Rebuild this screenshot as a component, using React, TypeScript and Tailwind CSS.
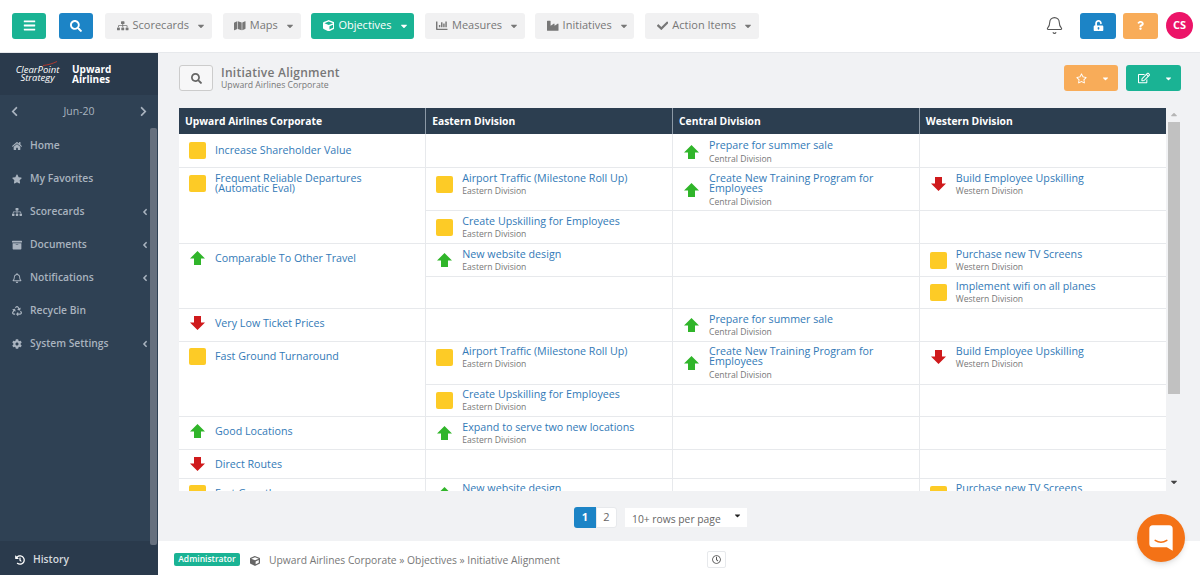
import type { ReactNode } from "react"
import {
  FaAngleLeft,
  FaArchive,
  FaBars,
  FaCaretDown,
  FaChartBar,
  FaCheck,
  FaChevronLeft,
  FaChevronRight,
  FaCog,
  FaCube,
  FaHistory,
  FaHome,
  FaIndustry,
  FaMap,
  FaQuestion,
  FaRecycle,
  FaRegBell,
  FaRegClock,
  FaRegEdit,
  FaRegStar,
  FaSearch,
  FaSitemap,
  FaStar,
  FaUnlockAlt,
} from "react-icons/fa"
import { Bell } from "lucide-react"

type Status = "yellow" | "up" | "down"
type Item = { status: Status; title: string; sub?: string }
type Cell = { item?: Item; rowSpan?: number }

const E = "Eastern Division"
const C = "Central Division"
const W = "Western Division"

const airport: Item = { status: "yellow", title: "Airport Traffic (Milestone Roll Up)", sub: E }
const upskill: Item = { status: "yellow", title: "Create Upskilling for Employees", sub: E }
const training: Item = { status: "up", title: "Create New Training Program for Employees", sub: C }
const build: Item = { status: "down", title: "Build Employee Upskilling", sub: W }
const prepare: Item = { status: "up", title: "Prepare for summer sale", sub: C }
const website: Item = { status: "up", title: "New website design", sub: E }
const screens: Item = { status: "yellow", title: "Purchase new TV Screens", sub: W }

// pad: top padding of items with a sub line, top: top margin of items without one
const rows: { h: number; pad: number; top: number; cells: Cell[] }[] = [
  { h: 33, pad: 6, top: 8, cells: [{ item: { status: "yellow", title: "Increase Shareholder Value" } }, {}, { item: prepare }, {}] },
  {
    h: 43,
    pad: 5,
    top: 7,
    cells: [
      { item: { status: "yellow", title: "Frequent Reliable Departures (Automatic Eval)" }, rowSpan: 2 },
      { item: airport },
      { item: training },
      { item: build },
    ],
  },
  { h: 33, pad: 5, top: 6, cells: [{ item: upskill }, {}, {}] },
  {
    h: 33,
    pad: 5,
    top: 6,
    cells: [
      { item: { status: "up", title: "Comparable To Other Travel" }, rowSpan: 2 },
      { item: website },
      {},
      { item: screens },
    ],
  },
  { h: 32, pad: 4, top: 6, cells: [{}, {}, { item: { status: "yellow", title: "Implement wifi on all planes", sub: W } }] },
  { h: 33, pad: 5, top: 6, cells: [{ item: { status: "down", title: "Very Low Ticket Prices" } }, {}, { item: prepare }, {}] },
  {
    h: 43,
    pad: 4,
    top: 6,
    cells: [
      { item: { status: "yellow", title: "Fast Ground Turnaround" }, rowSpan: 2 },
      { item: airport },
      { item: training },
      { item: build },
    ],
  },
  { h: 32, pad: 4, top: 6, cells: [{ item: upskill }, {}, {}] },
  {
    h: 33,
    pad: 5,
    top: 6,
    cells: [
      { item: { status: "up", title: "Good Locations" } },
      { item: { status: "up", title: "Expand to serve two new locations", sub: E } },
      {},
      {},
    ],
  },
  { h: 29, pad: 5, top: 6, cells: [{ item: { status: "down", title: "Direct Routes" } }, {}, {}, {}] },
  {
    h: 33,
    pad: 4,
    top: 6,
    cells: [{ item: { status: "yellow", title: "Fast Growth" } }, { item: website }, {}, { item: screens }],
  },
]

const navItems: { label: string; icon: ReactNode; w: string; active?: boolean }[] = [
  { label: "Scorecards", icon: <FaSitemap />, w: "w-[107px]" },
  { label: "Maps", icon: <FaMap />, w: "w-[78px]" },
  { label: "Objectives", icon: <FaCube />, w: "w-[103px]", active: true },
  { label: "Measures", icon: <FaChartBar />, w: "w-[100px]" },
  { label: "Initiatives", icon: <FaIndustry />, w: "w-[99px]" },
  { label: "Action Items", icon: <FaCheck />, w: "w-[114px]" },
]

const sideItems: { label: string; icon: ReactNode; more?: boolean }[] = [
  { label: "Home", icon: <FaHome /> },
  { label: "My Favorites", icon: <FaStar /> },
  { label: "Scorecards", icon: <FaSitemap />, more: true },
  { label: "Documents", icon: <FaArchive />, more: true },
  { label: "Notifications", icon: <FaRegBell />, more: true },
  { label: "Recycle Bin", icon: <FaRecycle /> },
  { label: "System Settings", icon: <FaCog />, more: true },
]

function StatusIcon({ status }: { status: Status }) {
  if (status === "yellow") return <div className="h-[17px] w-[17px] rounded-[2px] bg-[#fdcb26]" />
  return (
    <svg viewBox="0 0 15 14" className={`mx-auto h-[14px] w-[15px] ${status === "down" ? "rotate-180 text-[#cf1a1c]" : "text-[#30b52a]"}`}>
      <polygon points="7.5,0 15,7.5 11,7.5 11,14 4,14 4,7.5 0,7.5" fill="currentColor" />
    </svg>
  )
}

function ItemCell({ cell, pad, top }: { cell: Cell; pad: number; top: number }) {
  const { item } = cell
  return (
    <td rowSpan={cell.rowSpan} className="border-r border-b border-[#e7e9ec] p-0 align-top last:border-r-0">
      {item?.sub && (
        <div className="flex items-center gap-[9px] pl-[10px] pr-6" style={{ paddingTop: pad }}>
          <div className="w-[17px] shrink-0">
            <StatusIcon status={item.status} />
          </div>
          <div>
            <div className="text-[10.7px] leading-[10.5px] text-[#337ab7]">{item.title}</div>
            <div className="mt-[3px] text-[8.6px] leading-[10px] text-[#777]">{item.sub}</div>
          </div>
        </div>
      )}
      {item && !item.sub && (
        <div className="flex h-[17px] items-center gap-[9px] pl-[10px] pr-6" style={{ marginTop: top }}>
          <div className="w-[17px] shrink-0">
            <StatusIcon status={item.status} />
          </div>
          <div className="text-[10.7px] leading-[10.5px] text-[#337ab7]">{item.title}</div>
        </div>
      )}
    </td>
  )
}

export default function App() {
  return (
    <div className="flex h-[575px] w-[1200px] flex-col overflow-hidden bg-[#f1f2f4] font-['Open_Sans',sans-serif] text-[#666]">
      <header className="flex h-[53px] shrink-0 items-center border-b border-[#e7e9ec] bg-white pb-[1px] pl-3 pr-[7px]">
        <button className="flex h-[26px] w-[34px] items-center justify-center rounded-[3px] bg-[#1ab394] text-[13px] text-white">
          <FaBars />
        </button>
        <button className="ml-[13px] flex h-[26px] w-[34px] items-center justify-center rounded-[3px] bg-[#1c84c6] text-[12px] text-white">
          <FaSearch />
        </button>
        <div className="ml-[12px] flex w-[654px] justify-between">
          {navItems.map((n) => (
            <div
              key={n.label}
              className={`flex h-[26px] items-center justify-center gap-[4px] rounded-[3px] pl-[6px] text-[11px] ${n.w} ${
                n.active ? "bg-[#1ab394] text-white" : "bg-[#f1f1f2] text-[#777]"
              }`}
            >
              <span className="text-[11.5px]">{n.icon}</span>
              {n.label}
              <FaCaretDown className="ml-[3px] text-[10px]" />
            </div>
          ))}
        </div>
        <Bell className="ml-auto mr-[16px] h-[19px] w-[19px] text-[#555]" strokeWidth={1.4} />
        <button className="flex h-[26px] w-[36px] items-center justify-center rounded-[3px] bg-[#1c84c6] text-[11px] text-white">
          <FaUnlockAlt />
        </button>
        <button className="ml-[7px] flex h-[26px] w-[35px] items-center justify-center rounded-[3px] bg-[#f8ac59] text-[9px] text-white">
          <FaQuestion />
        </button>
        <div className="ml-[8px] flex h-[27px] w-[27px] items-center justify-center rounded-full bg-[#ec1468] text-[11px] font-bold text-white">
          CS
        </div>
      </header>

      <div className="flex min-h-0 flex-1">
        <aside className="flex w-[158px] shrink-0 flex-col bg-[#2f4154] text-[#a9b3bf]">
          <div className="flex h-[42px] shrink-0 items-center bg-[#2a3a4c] pl-[9px]">
            <div className="relative w-[63px] pr-[6px] text-center text-[9.5px] italic leading-[8.5px] text-white">
              <svg viewBox="0 0 14 5" className="absolute left-[34px] top-[-5px] h-[5px] w-[14px]">
                <path d="M0 4.5C5 4 10 2.5 14 0.5" fill="none" stroke="#c0392b" strokeWidth="0.9" />
              </svg>
              ClearPoint
              <br />
              Strategy
            </div>
            <div className="text-[10px] font-bold leading-[10.5px] text-white">
              Upward
              <br />
              Airlines
            </div>
          </div>
          <div className="flex h-[33px] shrink-0 items-center justify-between pl-[9px] pr-[9px] text-[10.5px]">
            <FaChevronLeft className="text-[11px]" />
            <span>Jun-20</span>
            <FaChevronRight className="text-[11px]" />
          </div>
          <div className="flex min-h-0 flex-1">
            <nav className="flex-1 pt-[1px]">
              {sideItems.map((s) => (
                <div key={s.label} className="flex h-[33px] items-center pl-[12px] text-[10.3px] font-semibold">
                  <span className="w-[17px] text-[10px]">{s.icon}</span>
                  <span className="ml-[1px]">{s.label}</span>
                  {s.more && <FaAngleLeft className="ml-auto text-[10px]" />}
                </div>
              ))}
            </nav>
            <div className="relative z-10 -mb-[4px] mr-[1px] w-[7px] rounded-[2px] bg-[#66707e]" />
          </div>
          <div className="flex h-[34px] shrink-0 items-center bg-[#2a3a4c] pl-[15px] pt-[4px] text-[10.3px] font-semibold text-[#d5d9de]">
            <FaHistory className="mr-[8px] text-[10px] text-white" />
            History
          </div>
        </aside>

        <main className="flex min-w-0 flex-1 flex-col">
          <div className="flex h-[55px] shrink-0 items-start pl-[21px] pr-[19px] pt-[12px]">
            <button className="flex h-[26px] w-[34px] items-center justify-center rounded-[3px] border border-[#ccc] bg-[#f7f7f8] text-[11px] text-[#666]">
              <FaSearch />
            </button>
            <div className="ml-[8px] pt-[1px]">
              <div className="text-[12px] font-semibold leading-[14px] tracking-[0.25px] text-[#777]">
                Initiative Alignment
              </div>
              <div className="text-[8.7px] leading-[10px] text-[#777]">Upward Airlines Corporate</div>
            </div>
            <div className="ml-auto flex gap-[8px]">
              <div className="flex h-[26px] w-[54px] items-center justify-between rounded-[3px] bg-[#f8ac59] pl-[12px] pr-[8px] text-white">
                <FaRegStar className="text-[11px]" />
                <FaCaretDown className="text-[9px]" />
              </div>
              <div className="flex h-[26px] w-[55px] items-center justify-between rounded-[3px] bg-[#1ab394] pl-[12px] pr-[8px] text-white">
                <FaRegEdit className="text-[12px]" />
                <FaCaretDown className="text-[9px]" />
              </div>
            </div>
          </div>

          <div className="flex h-[383px] shrink-0 pl-[21px] pr-[20px]">
            <div className="w-[988px] overflow-hidden">
              <table className="w-[987px] table-fixed border-collapse bg-white">
                <thead>
                  <tr className="h-[26px] bg-[#2c3e50] text-left text-[10.3px] font-bold text-white">
                    {["Upward Airlines Corporate", E, C, W].map((h) => (
                      <th key={h} className="border-r border-[#8c99a6] pl-[6px] pt-[2px] font-bold last:border-r-0">
                        {h}
                      </th>
                    ))}
                  </tr>
                </thead>
                <tbody>
                  {rows.map((r, i) => (
                    <tr key={i} style={{ height: r.h }}>
                      {r.cells.map((c, j) => (
                        <ItemCell key={j} cell={c} pad={r.pad} top={r.top} />
                      ))}
                    </tr>
                  ))}
                </tbody>
              </table>
            </div>
            <div className="flex w-[13px] flex-col items-center">
              <FaCaretDown className="mt-[2px] h-[10px] w-[10px] rotate-180 text-[#b5b5b5]" />
              <div className="mt-[2px] h-[272px] w-[12px] bg-[#c1c1c1]" />
              <FaCaretDown className="mb-[4px] mt-auto h-[10px] w-[10px] text-[#444]" />
            </div>
          </div>

          <div className="flex min-h-0 flex-1 items-start pl-[416px] pt-[16px]">
            <div className="flex h-[21px] w-[22px] items-center justify-center rounded-l-[3px] bg-[#1c84c6] text-[11px] font-bold text-white">
              1
            </div>
            <div className="flex h-[21px] w-[21px] items-center justify-center rounded-r-[3px] border border-[#e7e9ec] bg-white text-[11px] text-[#666]">
              2
            </div>
            <div className="ml-[8px] mt-[1px] flex h-[19px] w-[122px] items-start justify-between bg-white pl-[7px] pr-[5px] pt-[5px] text-[10.3px] leading-[13px] text-[#666]">
              10+ rows per page
              <FaCaretDown className="-mt-[2px] text-[9px] text-[#222]" />
            </div>
          </div>

          <footer className="flex h-[34px] shrink-0 items-center bg-white pl-[16px] pt-[2px] text-[10.3px] text-[#777]">
            <span className="flex h-[13px] w-[66px] items-center justify-center rounded-[2px] bg-[#1ab394] text-[8.5px] font-semibold text-white">
              Administrator
            </span>
            <FaCube className="ml-[10px] mt-[4px] text-[10px] text-[#666]" />
            <span className="ml-[9px] mt-[4px] w-[438px]">
              Upward Airlines Corporate » Objectives » Initiative Alignment
            </span>
            <span className="flex h-[17px] w-[19px] items-center justify-center rounded-[2px] border border-[#e7e9ec] text-[9px] text-[#555]">
              <FaRegClock />
            </span>
          </footer>
        </main>
      </div>

      <div className="absolute left-[1137px] top-[514px] flex h-[48px] w-[48px] items-center justify-center rounded-full bg-[#f47216] shadow-md">
        <svg viewBox="0 0 24 24" className="h-[28px] w-[28px]">
          <path d="M5 1h14a3 3 0 0 1 3 3v19l-5-3H5a3 3 0 0 1-3-3V4a3 3 0 0 1 3-3z" fill="#fff" />
          <path d="M7 14c3 2 7 2 10 0" fill="none" stroke="#f47216" strokeWidth="1.3" strokeLinecap="round" />
        </svg>
      </div>
    </div>
  )
}
